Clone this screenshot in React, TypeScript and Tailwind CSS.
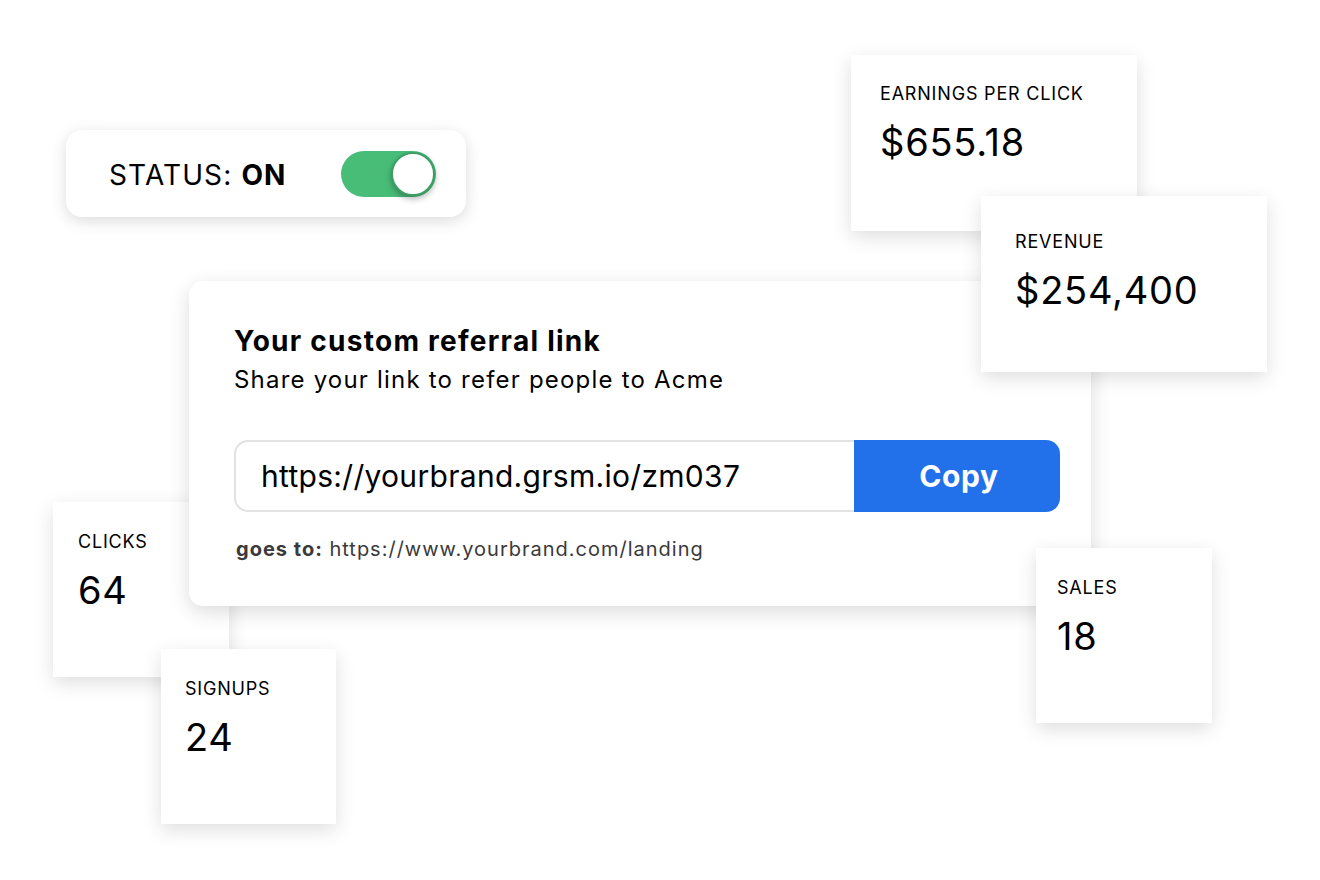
import React from 'react';

type Stat = { label: string; value: string; className: string };

function StatCard({ label, value, className }: Stat) {
  return (
    <div className={`absolute bg-white shadow-[0_6px_18px_rgba(0,0,0,0.13)] ${className}`}>
      <div className="text-[18px] leading-[22px] text-black tracking-[0.045em]">{label}</div>
      <div className="mt-[14px] text-[38px] leading-[46px] text-black tracking-[0.02em]">{value}</div>
    </div>
  );
}

export default function App() {
  return (
    <div className="relative w-[1320px] h-[880px] overflow-hidden bg-white font-['Inter',sans-serif]">
      {/* Status toggle */}
      <div className="absolute left-[66px] top-[130px] w-[400px] h-[87px] rounded-[16px] bg-white shadow-[0_4px_16px_rgba(0,0,0,0.14)] flex items-center justify-between pl-[43px] pr-[30px]">
        <div className="text-[28px] leading-none text-black tracking-[0.04em] pt-[3px]">
          STATUS: <span className="font-bold">ON</span>
        </div>
        <div className="w-[95px] h-[46px] rounded-full bg-[#48bd78] flex items-center justify-end pr-[1px]">
          <div className="w-[44px] h-[44px] rounded-full bg-white border-2 border-[#3e9f66] shadow-[0_3px_6px_rgba(0,0,0,0.3)]" />
        </div>
      </div>

      <StatCard label="CLICKS" value="64" className="left-[53px] top-[502px] w-[176px] h-[175px] pl-[25px] pt-[29px]" />

      {/* Referral card */}
      <div className="absolute left-[189px] top-[281px] w-[902px] h-[325px] rounded-[14px] bg-white shadow-[0_6px_20px_rgba(0,0,0,0.14)] pl-[45px] pr-[31px] pt-[42px]">
        <div className="text-[28px] leading-[36px] font-bold text-black tracking-[0.045em]">Your custom referral link</div>
        <div className="text-[24px] leading-[30px] text-black mt-[6px] tracking-[0.05em]">Share your link to refer people to Acme</div>
        <div className="flex mt-[45px] h-[72px]">
          <div className="flex-1 flex items-center rounded-l-[14px] border-2 border-r-0 border-[#e2e2e2] pl-[25px] text-[30px] text-black tracking-[0.01em]">
            https://yourbrand.grsm.io/zm037
          </div>
          <button className="w-[206px] rounded-r-[14px] bg-[#2270ea] text-white text-[30px] font-bold tracking-[0.02em] pl-[4px]">Copy</button>
        </div>
        <div className="mt-[25px] text-[20px] leading-[24px] text-[#3a3a3a] pl-[2px] tracking-[0.05em]">
          <span className="font-bold">goes to:</span> https://www.yourbrand.com/landing
        </div>
      </div>

      <StatCard label="SIGNUPS" value="24" className="left-[161px] top-[649px] w-[175px] h-[175px] pl-[24px] pt-[29px]" />
      <StatCard label="EARNINGS PER CLICK" value="$655.18" className="left-[851px] top-[55px] w-[286px] h-[176px] pl-[29px] pt-[28px]" />
      <StatCard label="REVENUE" value="$254,400" className="left-[981px] top-[196px] w-[286px] h-[176px] pl-[34px] pt-[35px]" />
      <StatCard label="SALES" value="18" className="left-[1036px] top-[548px] w-[176px] h-[175px] pl-[21px] pt-[29px]" />
    </div>
  );
}
